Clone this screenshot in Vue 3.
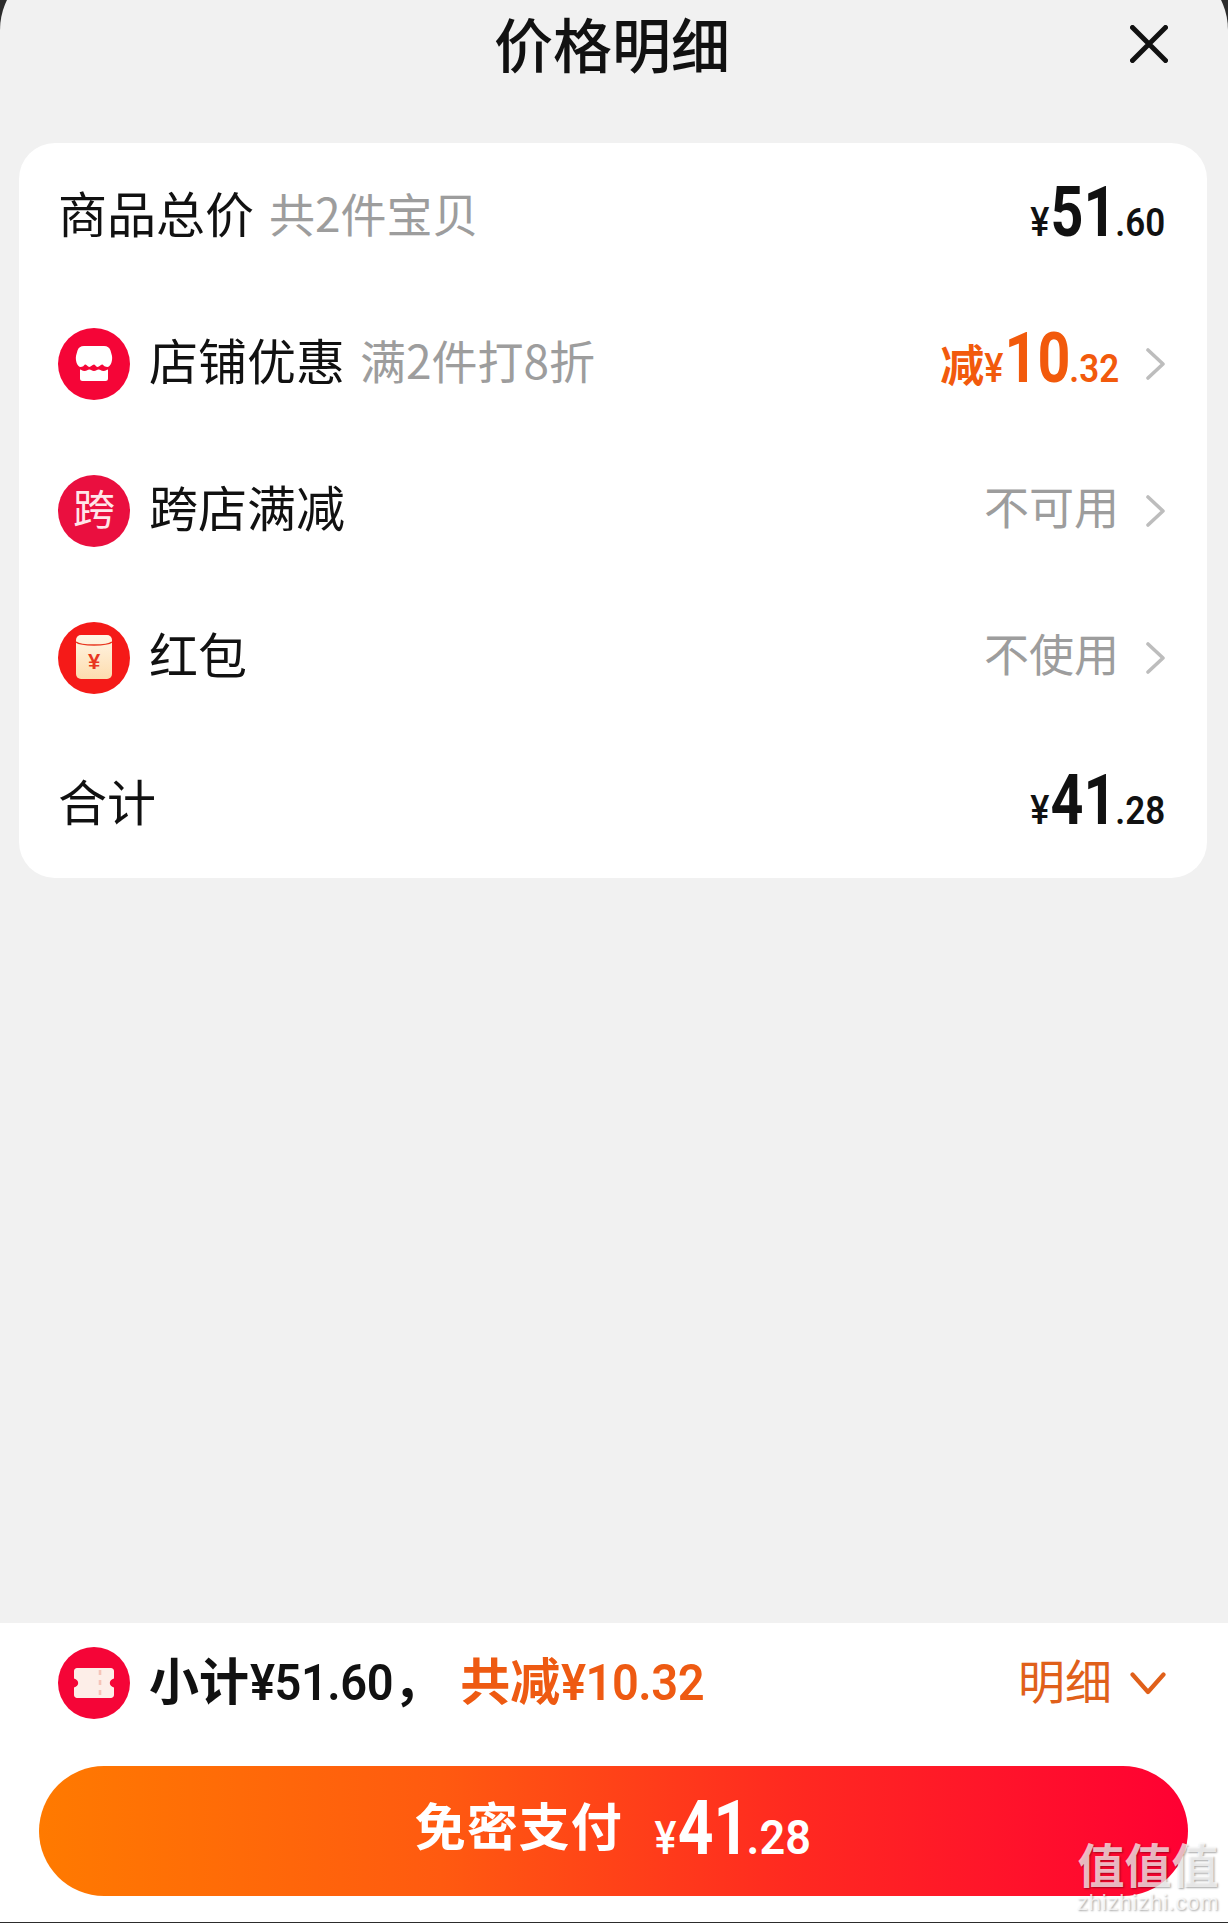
<script setup>
const rows = [
  { key: 'shop', label: '店铺优惠', sub: '满2件打8折', chevron: true, discount: true },
  { key: 'cross', label: '跨店满减', status: '不可用', chevron: true },
  { key: 'packet', label: '红包', status: '不使用', chevron: true }
]
</script>

<template>
  <div class="page">
    <div class="sheet">
      <header class="head">
        <h1 class="title">价格明细</h1>
        <svg class="close" viewBox="0 0 38 38" width="38" height="38">
          <path d="M2.500 2.500 35.500 35.500M35.500 2.500 2.500 35.500" fill="none" stroke="#111" stroke-width="5" stroke-linecap="round" />
        </svg>
      </header>

      <section class="card">
        <div class="row">
          <div class="left">
            <span class="label">商品总价</span>
            <span class="sub">共2件宝贝</span>
          </div>
          <div class="price">
            <span class="yen">¥</span><span class="big">51</span><span class="small">.60</span>
          </div>
        </div>

        <div v-for="r in rows" :key="r.key" class="row">
          <div class="left">
            <span class="ico" :class="'ico-' + r.key">
              <svg v-if="r.key === 'shop'" viewBox="0 0 72 72" width="72" height="72">
                <path d="M26 18h20c3.500 0 5.500 1.600 6.500 4.500l1.400 5c1 4.500-.9 11.500-4.700 11.500-3.300 0-3.700-2.400-5.200-2.400S41.500 39 39.500 39 37.700 36.600 36 36.600 33 39 31.300 39s-2.400-2.400-3.900-2.400S26 39 22.800 39c-3.800 0-5.700-7-4.700-11.500l1.400-5c1-2.900 3-4.500 6.500-4.500z" fill="#fff" />
                <path d="M22 41.500c1.500 0 2 1.500 4.500 1.500s3-1.500 4.800-1.500 2.700 1.500 4.700 1.500 2.900-1.500 4.700-1.500 2.300 1.500 4.800 1.500 3-1.500 4.500-1.500v9c0 1.700-1 2.500-2.500 2.500h-23c-1.500 0-2.500-.8-2.500-2.500z" fill="#fff" />
              </svg>
              <template v-else-if="r.key === 'cross'">跨</template>
              <svg v-else viewBox="0 0 72 72" width="72" height="72">
                <defs>
                  <linearGradient id="pk" x1="0" y1="0" x2="0" y2="1">
                    <stop offset="0" stop-color="#fff6e6" />
                    <stop offset="1" stop-color="#fddcae" />
                  </linearGradient>
                </defs>
                <rect x="18" y="13" width="36" height="44" rx="5" fill="url(#pk)" />
                <path d="M18 20c5 4 31 4 36 0" fill="none" stroke="#e8361f" stroke-width="1.400" />
                <text x="36" y="47" text-anchor="middle" class="pk-yen">¥</text>
              </svg>
            </span>
            <span class="label">{{ r.label }}</span>
            <span v-if="r.sub" class="sub">{{ r.sub }}</span>
          </div>
          <div class="right">
            <div v-if="r.discount" class="price orange">
              <span class="minus">减</span><span class="yen">¥</span><span class="big">10</span><span class="small">.32</span>
            </div>
            <span v-else class="status">{{ r.status }}</span>
            <svg class="chev" viewBox="0 0 19 32" width="19" height="32">
              <path d="M2 2 17 16 2 30" fill="none" stroke="#bdbdbd" stroke-width="3.600" stroke-linecap="round" stroke-linejoin="round" />
            </svg>
          </div>
        </div>

        <div class="row">
          <div class="left"><span class="label">合计</span></div>
          <div class="price">
            <span class="yen">¥</span><span class="big">41</span><span class="small">.28</span>
          </div>
        </div>
      </section>

      <footer class="bar">
        <div class="summary">
          <div class="left">
            <span class="ico ico-ticket">
              <svg viewBox="0 0 72 72" width="72" height="72">
                <path d="M19 21h34c1.600 0 3 1.400 3 3v7.500c-2.500.6-4.200 2.300-4.200 4.500s1.700 3.900 4.200 4.500V48c0 1.600-1.400 3-3 3H19c-1.600 0-3-1.400-3-3v-7.500c2.500-.6 4.200-2.300 4.200-4.500s-1.700-3.900-4.200-4.500V24c0-1.600 1.400-3 3-3z" fill="#fdeee8" />
                <path d="M42 23v26" fill="none" stroke="#f6c4b8" stroke-width="2.600" stroke-dasharray="5 5" />
              </svg>
            </span>
            <span class="sum-text">小计<span class="num">¥51.60</span>，</span>
            <span class="sum-off">共减<span class="num">¥10.32</span></span>
          </div>
          <div class="detail">
            <span class="detail-text">明细</span>
            <svg viewBox="0 0 36 23" width="36" height="23">
              <path d="M2.500 2.500 18 20 33.500 2.500" fill="none" stroke="#e0601a" stroke-width="4.200" stroke-linecap="round" stroke-linejoin="round" />
            </svg>
          </div>
        </div>
        <button class="pay" type="button">
          <span class="pay-label">免密支付</span>
          <span class="pay-price"><span class="yen">¥</span><span class="big">41</span><span class="small">.28</span></span>
        </button>
      </footer>
    </div>

    <div class="mark">
      <div class="mark-cn">值值值</div>
      <div class="mark-en">zhizhizhi.com</div>
    </div>
  </div>
</template>

<style scoped>
.page {
  position: relative;
  width: 1228px;
  height: 1923px;
  overflow: hidden;
  background: #2c2c2c;
  font-family: "Noto Sans CJK SC", "Liberation Sans", sans-serif;
  color: #111;
}
.sheet {
  margin-top: -38px;
  padding-top: 38px;
  height: 1922px;
  display: flex;
  flex-direction: column;
  background: #f1f1f1;
  border-radius: 68px 68px 0 0;
}
.head {
  height: 143px;
  position: relative;
  display: flex;
  justify-content: center;
  flex: none;
}
.title {
  margin: 10px 4px 0 0;
  font-size: 59px;
  line-height: 66px;
  font-weight: 500;
}
.close {
  position: absolute;
  right: 60px;
  top: 25px;
}
.card {
  flex: none;
  margin: 0 21px 0 19px;
  background: #fff;
  border-radius: 36px;
  height: 735px;
  display: flex;
  flex-direction: column;
}
.row {
  flex: 1;
  display: flex;
  align-items: center;
  justify-content: space-between;
  padding: 0 42px 0 39px;
}
.left { display: flex; align-items: center; }
.right { display: flex; align-items: center; }
.label { font-size: 49px; line-height: 60px; margin: 0 0 10px 0; }
.sub { font-size: 46px; line-height: 60px; color: #9d9d9d; margin: 0 0 10px 15px; }
.ico {
  width: 72px;
  height: 72px;
  border-radius: 50%;
  flex: none;
  display: flex;
  align-items: center;
  justify-content: center;
  margin-right: 19px;
}
.ico svg { display: block; }
.ico-shop, .ico-ticket { background: #f50537; }
.ico-cross {
  background: #ea0f3f;
  color: #ffe6ea;
  font-size: 42px;
  line-height: 60px;
  padding-bottom: 8px;
  box-sizing: border-box;
}
.ico-packet { background: #f51a18; }
.pk-yen { font: 700 22px "Liberation Sans", sans-serif; fill: #e8361f; }

.price {
  display: flex;
  align-items: baseline;
  font-family: Roboto, "Liberation Sans", sans-serif;
  color: #111;
  margin-bottom: 10px;
}
.yen {
  display: inline-block;
  font-size: 40px;
  font-weight: 500;
  transform: scaleX(.9);
  transform-origin: right;
  margin-left: -2px;
}
.big {
  display: inline-block;
  font-size: 70px;
  line-height: 70px;
  font-weight: 700;
  transform: scaleX(.82);
  transform-origin: right;
  margin-left: -13px;
}
.small {
  display: inline-block;
  font-size: 38px;
  font-weight: 600;
  transform: scaleX(.92);
  transform-origin: right;
  margin-left: -6px;
}
.orange { color: #f25a0c; }
.minus {
  font-family: "Noto Sans CJK SC", sans-serif;
  font-size: 44px;
  font-weight: 700;
}
.status { font-size: 45px; line-height: 60px; color: #9d9d9d; margin-bottom: 10px; }
.chev { margin-left: 27px; flex: none; display: block; }

.bar {
  margin-top: auto;
  height: 299px;
  flex: none;
  background: #fff;
  display: flex;
  flex-direction: column;
}
.summary {
  height: 120px;
  flex: none;
  display: flex;
  align-items: center;
  justify-content: space-between;
  padding: 0 62px 0 58px;
}
.sum-text, .sum-off {
  font-size: 50px;
  line-height: 60px;
  font-weight: 700;
  margin-bottom: 6px;
}
.sum-text { color: #111; }
.sum-off { color: #ee5a12; margin-left: 17px; }
.num {
  display: inline-block;
  font-family: Roboto, "Liberation Sans", sans-serif;
  font-weight: 600;
  font-size: 50px;
  letter-spacing: -.5px;
  transform: scaleX(.94);
  transform-origin: left;
  margin: 0 -9px 0 1px;
}
.detail {
  display: flex;
  align-items: center;
  gap: 18px;
  color: #e0601a;
  font-size: 47px;
  line-height: 60px;
}
.detail-text { margin-bottom: 8px; }
.pay {
  margin: 23px 40px 0 39px;
  height: 130px;
  border: 0;
  padding: 0;
  border-radius: 65px;
  background: linear-gradient(90deg, #ff7a00 0%, #ff5a10 35%, #ff2a20 65%, #ff0033 100%);
  color: #fff;
  display: flex;
  align-items: center;
  justify-content: center;
  font-family: inherit;
}
.pay-label {
  font-size: 51px;
  line-height: 60px;
  font-weight: 700;
  letter-spacing: 1px;
  margin-bottom: 14px;
}
.pay-price {
  display: flex;
  align-items: baseline;
  margin: 0 1px 6px 31px;
  font-family: Roboto, "Liberation Sans", sans-serif;
}
.pay-price .yen { font-size: 46px; }
.pay-price .big { font-size: 76px; line-height: 76px; margin-left: -14px; }
.pay-price .small { font-size: 49px; margin-left: -8px; }

.mark {
  position: absolute;
  right: 9px;
  bottom: 9px;
  width: 142px;
  text-align: center;
  color: rgba(255, 255, 255, .72);
  text-shadow: 1px 1px 2px rgba(0, 0, 0, .35);
}
.mark-cn { font-size: 47px; line-height: 50px; font-weight: 700; letter-spacing: 0; white-space: nowrap; margin-bottom: 4px; }
.mark-en { font: 400 22px/22px "Liberation Sans", sans-serif; letter-spacing: .8px; white-space: nowrap; }
</style>

<style>
html, body { margin: 0; background: #2c2c2c; }
</style>
